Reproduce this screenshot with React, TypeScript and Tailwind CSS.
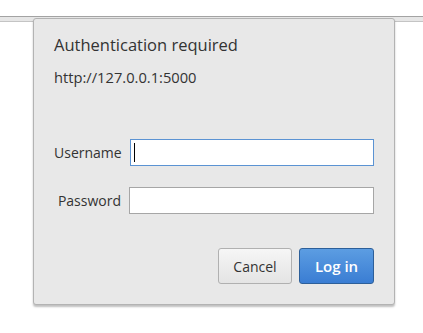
import React from "react";

export default function App() {
  return (
    <div
      className="relative w-[423px] h-[333px] bg-white overflow-hidden"
      style={{ fontFamily: '"Open Sans", "Noto Sans", sans-serif' }}
    >
      <div className="mt-[16px] h-[6px] border-t border-b border-t-[#a3a3a3] border-b-[#c4c4c4] bg-[#e6e6e6]" />
      <div className="absolute left-[33px] top-[18px] w-[362px] h-[287px] rounded-[3px] border border-[#b3b3b3] bg-[#e8e8e8] shadow-[0_2px_2px_rgba(0,0,0,0.25)] px-[20px] flex flex-col">
        <div className="mt-[14px] h-[24px] leading-[24px] text-[16.5px] text-[#333]">
          Authentication required
        </div>
        <div className="mt-[10px] h-[20px] leading-[20px] text-[14.7px] text-[#333]">
          http://127.0.0.1:5000
        </div>
        <div className="mt-[52px] flex flex-col gap-[21px]">
          <div className="flex items-center justify-end gap-[8px]">
            <span className="text-[14px] text-[#333]">Username</span>
            <div className="relative w-[245px] h-[27px] bg-white border border-[#5b93d3]">
              <div className="absolute left-[3px] top-[3px] w-[1px] h-[19px] bg-black" />
            </div>
          </div>
          <div className="flex items-center justify-end gap-[8px]">
            <span className="text-[14px] text-[#333]">Password</span>
            <div className="w-[245px] h-[27px] bg-white border border-[#a6a6a6]" />
          </div>
        </div>
        <div className="mt-[34px] flex justify-end gap-[7px]">
          <button className="w-[74px] h-[36px] rounded-[3px] border border-[#b0b0b0] bg-gradient-to-b from-[#f6f6f6] to-[#e4e4e4] text-[14px] text-[#333]">
            Cancel
          </button>
          <button className="w-[75px] h-[36px] rounded-[3px] border border-[#2d5f99] bg-gradient-to-b from-[#5c9de2] to-[#3a7dd3] text-[15px] font-semibold text-white">
            Log in
          </button>
        </div>
      </div>
    </div>
  );
}
